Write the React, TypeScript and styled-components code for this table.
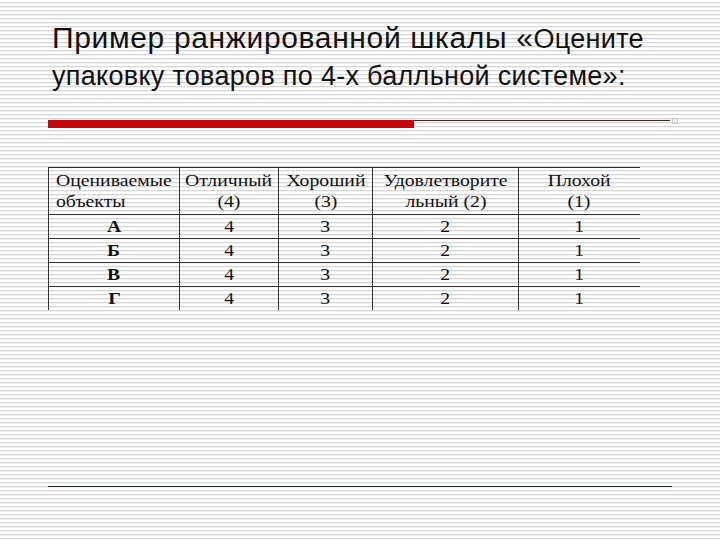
import React from 'react';
import styled, { createGlobalStyle } from 'styled-components';

const GlobalStyle = createGlobalStyle`
  html, body {
    margin: 0;
    padding: 0;
  }
  body {
    width: 720px;
    height: 540px;
    overflow: hidden;
    background: repeating-linear-gradient(
      to bottom,
      #ffffff 0px,
      #ffffff 2px,
      #d6d6d6 2px,
      #d6d6d6 3px,
      #f2f2f2 3px,
      #f2f2f2 4px
    );
  }
`;

const Slide = styled.div`
  width: 720px;
  height: 540px;
  display: flex;
  flex-direction: column;
  box-sizing: border-box;
  padding: 20px 0 0 48px;
`;

const Title = styled.h1`
  margin: 0 0 0 4px;
  font-family: 'Liberation Sans', Arial, sans-serif;
  font-weight: 400;
  color: #111;
  font-size: 27px;
  line-height: 36px;
  letter-spacing: 0.3px;
  white-space: nowrap;
`;

const BigPart = styled.span`
  font-size: 30px;
  letter-spacing: 0.65px;
`;

const SecondLine = styled.span`
  display: inline-block;
  margin-top: 1px;
`;

const RuleRow = styled.div`
  display: flex;
  align-items: flex-start;
  width: 630px;
  margin-top: 26px;
`;

const ThickRule = styled.div`
  width: 366px;
  height: 8px;
  background: #c40808;
`;

const ThinRule = styled.div`
  flex: 1;
  height: 1px;
  background: #5b1f1f;
`;

const Marker = styled.div`
  width: 4px;
  height: 4px;
  margin: -2px 0 0 2px;
  border: 1px solid #c8c8c8;
`;

const Table = styled.table`
  margin-top: 39px;
  border-collapse: collapse;
  table-layout: fixed;
  font-family: 'Liberation Serif', 'Times New Roman', serif;
  font-size: 17px;
  color: #111;
  width: 591px;
`;

const Th = styled.th<{ $left?: boolean; $w: number }>`
  width: ${(p) => p.$w}px;
  font-weight: 400;
  text-align: ${(p) => (p.$left ? 'left' : 'center')};
  padding: 2px 0 2px ${(p) => (p.$left ? '7px' : '0')};
  line-height: 21px;
  border-left: 1px solid #333;
  border-top: 1px solid #333;
  border-bottom: 1px solid #333;
  vertical-align: top;
  box-sizing: border-box;
`;

const Td = styled.td`
  text-align: center;
  height: 23px;
  padding: 0;
  line-height: 23px;
  border-left: 1px solid #333;
  border-bottom: 1px solid #333;
`;

const LastRowTd = styled(Td)`
  border-bottom: none;
`;

// the source slide has its table text stretched sideways
const Wide = styled.span<{ $left?: boolean }>`
  display: inline-block;
  transform: scaleX(1.16);
  transform-origin: ${(p) => (p.$left ? 'left center' : 'center')};
  white-space: nowrap;
`;

const BottomRule = styled.div`
  margin-top: auto;
  margin-bottom: 53px;
  width: 624px;
  height: 1px;
  background: #3a1515;
`;

const headers = [
  { label: ['Оцениваемые', 'объекты'], w: 131, left: true },
  { label: ['Отличный', '(4)'], w: 99 },
  { label: ['Хороший', '(3)'], w: 94 },
  { label: ['Удовлетворите', 'льный (2)'], w: 146 },
  { label: ['Плохой', '(1)'], w: 121 },
];

const rows = ['А', 'Б', 'В', 'Г'];

export default function App() {
  return (
    <>
      <GlobalStyle />
      <Slide>
        <Title>
          <BigPart>Пример ранжированной шкалы «</BigPart>Оцените
          <br />
          <SecondLine>упаковку товаров по 4-х балльной системе»:</SecondLine>
        </Title>
        <RuleRow>
          <ThickRule />
          <ThinRule />
          <Marker />
        </RuleRow>
        <Table>
          <thead>
            <tr>
              {headers.map((h, i) => (
                <Th key={i} $w={h.w} $left={h.left}>
                  <Wide $left={h.left}>{h.label[0]}</Wide>
                  <br />
                  <Wide $left={h.left}>{h.label[1]}</Wide>
                </Th>
              ))}
            </tr>
          </thead>
          <tbody>
            {rows.map((r, i) => {
              const Cell = i === rows.length - 1 ? LastRowTd : Td;
              return (
                <tr key={r}>
                  <Cell style={{ fontWeight: 700 }}>
                    <Wide>{r}</Wide>
                  </Cell>
                  <Cell><Wide>4</Wide></Cell>
                  <Cell><Wide>3</Wide></Cell>
                  <Cell><Wide>2</Wide></Cell>
                  <Cell><Wide>1</Wide></Cell>
                </tr>
              );
            })}
          </tbody>
        </Table>
        <BottomRule />
      </Slide>
    </>
  );
}
